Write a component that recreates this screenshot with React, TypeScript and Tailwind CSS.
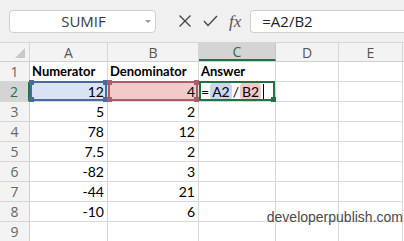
import React from "react";

const cols = ["A", "B", "C", "D", "E"];
const colW = ["w-[78px]", "w-[91px]", "w-[77px]", "w-[63px]", "w-[64px]"];
const data: [string, string][] = [
  ["12", "4"],
  ["5", "2"],
  ["78", "12"],
  ["7.5", "2"],
  ["-82", "3"],
  ["-44", "21"],
  ["-10", "6"],
];

const cellFont = { fontFamily: "Lato, 'Open Sans', sans-serif" };

function Handle({ pos, color }: { pos: string; color: string }) {
  return <span className={`absolute w-[5px] h-[5px] ${pos} ${color}`} />;
}

export default function App() {
  return (
    <div className="w-[404px] h-[241px] overflow-hidden bg-white relative" style={cellFont}>
      {/* formula bar */}
      <div className="h-[43px] bg-[#f0f0f0] flex items-center border-b border-[#d6d6d6]">
        <div className="ml-[9px] w-[147px] h-[23px] bg-white border border-[#cfcfcf] rounded-[4px] flex items-center relative">
          <span className="flex-1 text-center text-[15px] text-[#3a3a3a] pl-[2px]" style={{ fontFamily: "'Open Sans', sans-serif" }}>
            SUMIF
          </span>
          <span className="absolute right-[4px] top-[9px] w-0 h-0 border-l-[3px] border-r-[3px] border-t-[3px] border-l-transparent border-r-transparent border-t-[#999]" />
        </div>
        <div className="w-[22px]" />
        <svg width="14" height="14" viewBox="0 0 14 14" className="mr-[11px]">
          <path d="M1.5 1.5 L12.5 12.5 M12.5 1.5 L1.5 12.5" stroke="#444" strokeWidth="1.3" fill="none" />
        </svg>
        <svg width="15" height="12" viewBox="0 0 15 12" className="mr-[11px]">
          <path d="M1 6 L5 10.5 L14 1" stroke="#444" strokeWidth="1.3" fill="none" />
        </svg>
        <span className="text-[17px] italic text-[#555] mr-[9px] leading-none" style={{ fontFamily: "'Liberation Serif', serif" }}>
          fx
        </span>
        <div className="flex-1 h-[23px] bg-white border border-[#cfcfcf] border-r-0 rounded-l-[4px] flex items-center pl-[11px]">
          <span className="text-[15px] text-[#222]" style={{ fontFamily: "'Open Sans', sans-serif" }}>=A2/B2</span>
        </div>
      </div>

      {/* column headers */}
      <div className="flex h-[19px] bg-[#f3f3f3] border-b border-[#d0d0d0]">
        <div className="w-[30px] border-r border-[#d6d6d6] relative">
          <svg width="10" height="10" className="absolute right-[4px] bottom-[3px]">
            <path d="M10 0 L10 10 L0 10 Z" fill="#c8c8c8" />
          </svg>
        </div>
        {cols.map((c, i) => (
          <div
            key={c}
            className={`${colW[i]} flex items-center justify-center text-[14px] border-r ${
              c === "C"
                ? "bg-[#d4d4d4] text-[#217346] border-[#c6c6c6] border-b-2 border-b-[#217346]"
                : "text-[#555] border-[#d6d6d6]"
            }`}
            style={{ fontFamily: "'Open Sans', sans-serif" }}
          >
            {c}
          </div>
        ))}
      </div>

      {/* rows */}
      {Array.from({ length: 9 }).map((_, r) => {
        const rowNum = r + 1;
        const sel = rowNum === 2;
        return (
          <div key={r} className="flex h-[20px]">
            <div
              className={`w-[30px] flex items-center justify-center text-[14px] border-b border-[#d6d6d6] ${
                sel
                  ? "bg-[#d4d4d4] text-[#217346] border-r-2 border-r-[#217346]"
                  : "bg-[#f3f3f3] text-[#666] border-r border-r-[#d0d0d0]"
              }`}
              style={{ fontFamily: "'Open Sans', sans-serif" }}
            >
              {rowNum}
            </div>
            {cols.map((c, i) => {
              let content: React.ReactNode = null;
              let cls = "";
              let overlay: React.ReactNode = null;
              if (rowNum === 1) {
                if (c === "A") content = "Numerator";
                if (c === "B") content = "Denominator";
                if (c === "C") content = "Answer";
                cls = "font-bold justify-start pl-[2px] text-black text-[13px]";
              } else if (rowNum <= 8 && (c === "A" || c === "B")) {
                content = data[rowNum - 2][c === "A" ? 0 : 1];
                cls = "justify-end pr-[3px] text-black text-[14px]";
              } else {
                cls = "text-[14px]";
              }
              if (sel && c === "A") {
                cls += " bg-[#dae3f3]";
                overlay = (
                  <div className="absolute inset-0 -top-px border-2 border-[#4b6a9b] pointer-events-none">
                    <Handle pos="-left-[3px] -top-[3px]" color="bg-[#4b6a9b]" />
                    <Handle pos="-right-[3px] -top-[3px]" color="bg-[#4b6a9b]" />
                    <Handle pos="-left-[3px] -bottom-[3px]" color="bg-[#4b6a9b]" />
                    <Handle pos="-right-[3px] -bottom-[3px]" color="bg-[#4b6a9b]" />
                  </div>
                );
              }
              if (sel && c === "B") {
                cls += " bg-[#f2caca]";
                overlay = (
                  <div className="absolute inset-0 -top-px border-2 border-[#a86068] pointer-events-none">
                    <Handle pos="-left-[3px] -top-[3px]" color="bg-[#a86068]" />
                    <Handle pos="-right-[3px] -top-[3px]" color="bg-[#a86068]" />
                    <Handle pos="-left-[3px] -bottom-[3px]" color="bg-[#a86068]" />
                    <Handle pos="-right-[3px] -bottom-[3px]" color="bg-[#a86068]" />
                  </div>
                );
              }
              if (sel && c === "C") {
                cls = "justify-start pl-[2px] text-black text-[14px]";
                content = (
                  <span className="flex items-center whitespace-nowrap">
                    <span>=</span>
                    <span className="bg-[#c9d6ee] rounded-[6px] px-[2px] ml-[1px]">A2</span>
                    <span className="mx-[1px]">/</span>
                    <span className="bg-[#f0c8c8] rounded-[6px] px-[2px]">B2</span>
                    <span className="w-px h-[15px] bg-black ml-[2px]" />
                  </span>
                );
                overlay = (
                  <div className="absolute inset-0 -top-px border-2 border-[#217346] pointer-events-none">
                    <Handle pos="-right-[3px] -bottom-[3px]" color="bg-[#217346]" />
                  </div>
                );
              }
              return (
                <div
                  key={c}
                  className={`${colW[i]} relative flex items-center border-r border-b border-[#d9d9d9] ${cls}`}
                >
                  {content}
                  {overlay}
                </div>
              );
            })}
          </div>
        );
      })}

      <div
        className="absolute right-[1px] top-[207px] text-[14px] text-[#4a4a4a] whitespace-nowrap"
        style={{ fontFamily: "'Liberation Sans', Arial, sans-serif" }}
      >
        developerpublish.com
      </div>
    </div>
  );
}
